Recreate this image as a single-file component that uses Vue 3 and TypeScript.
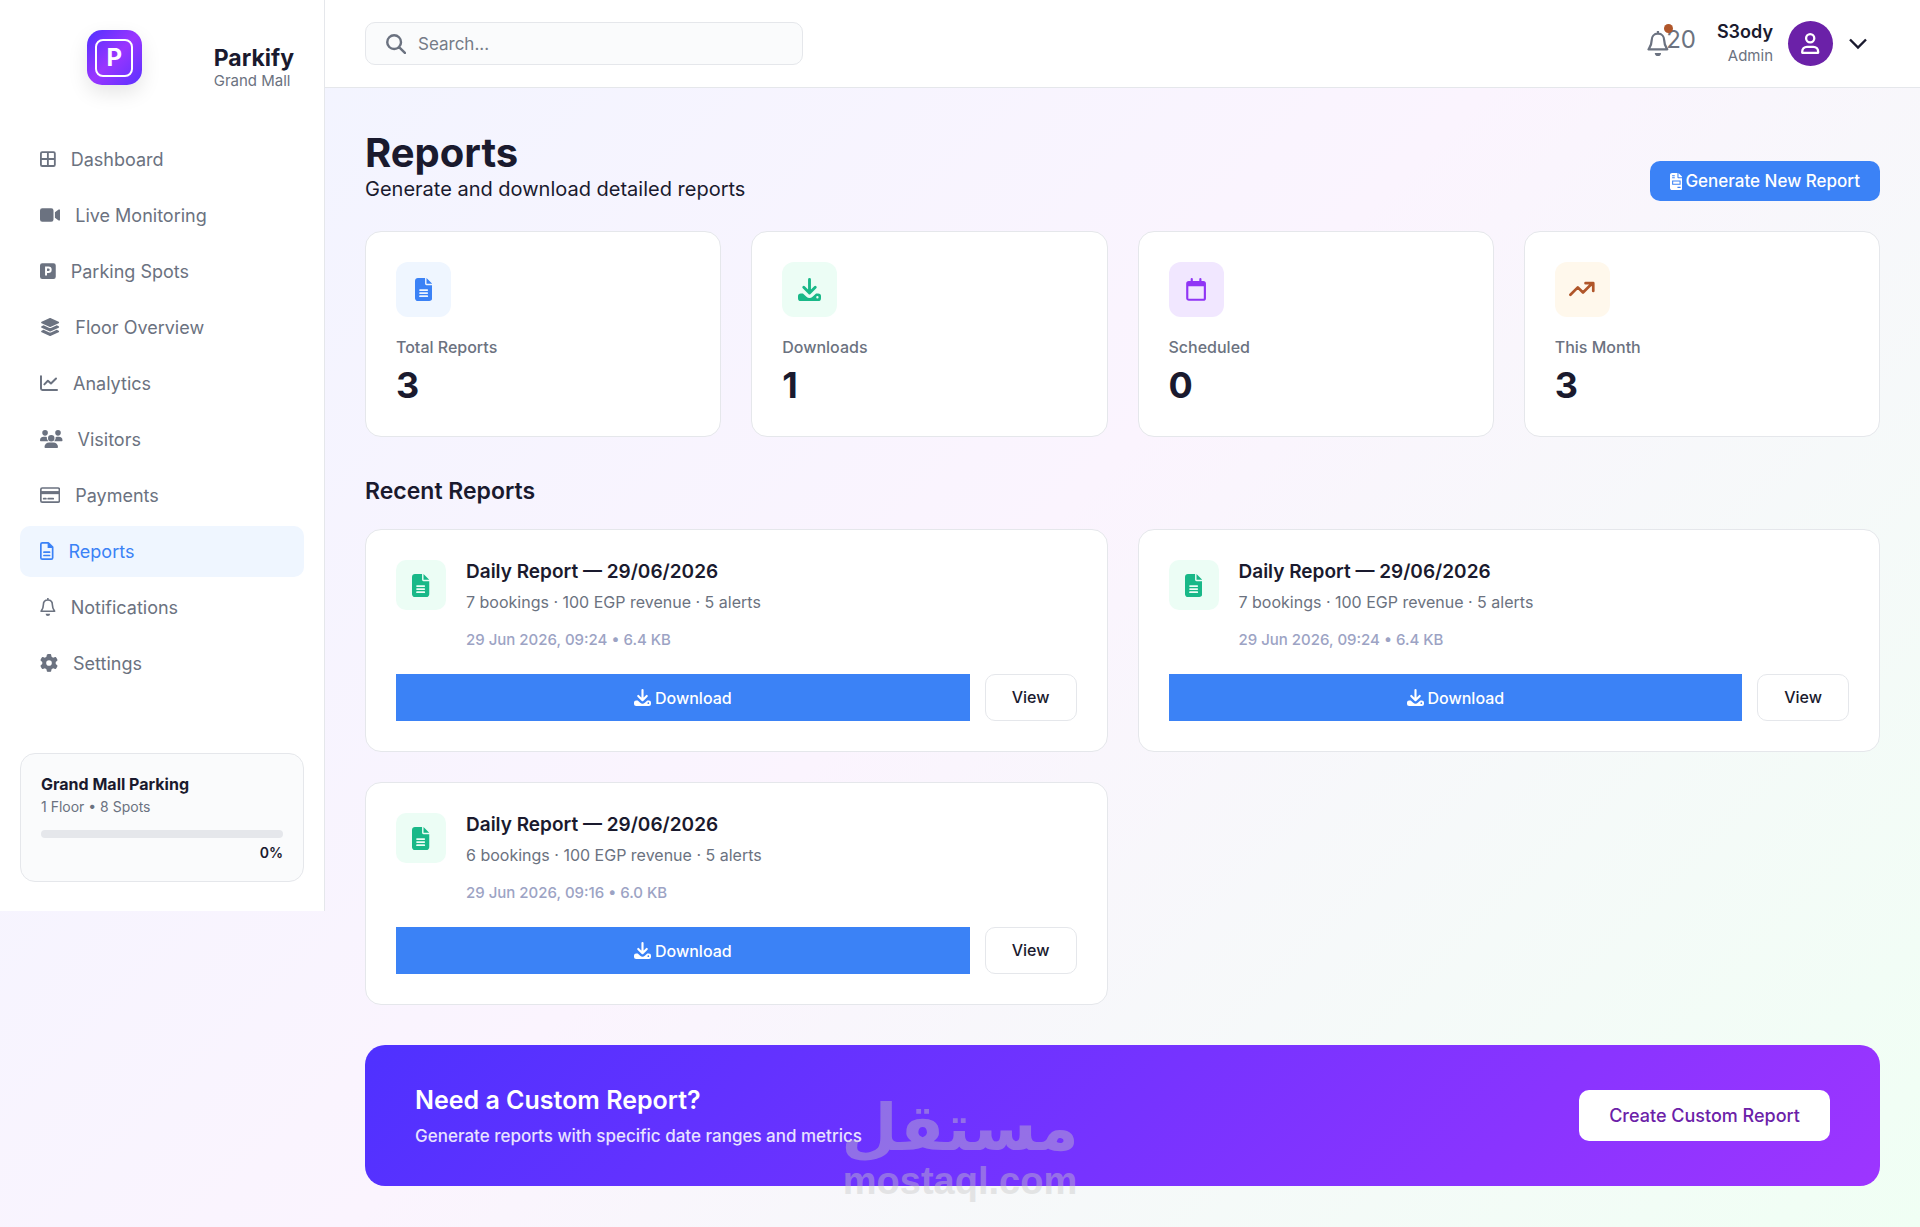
<script setup lang="ts">
import { h, ref } from 'vue'

interface Glyph {
  w: number
  fill?: string
  line?: string
  weight?: number
}

const glyphs: Record<string, Glyph> = {
  grid: { w: 448, line: 'M64 58H384a38 38 0 0 1 38 38V416a38 38 0 0 1-38 38H64a38 38 0 0 1-38-38V96a38 38 0 0 1 38-38zM224 58V454M26 256H422', weight: 52 },
  video: { w: 576, fill: 'M64 64H320a64 64 0 0 1 64 64V384a64 64 0 0 1-64 64H64a64 64 0 0 1-64-64V128a64 64 0 0 1 64-64zM424 176L520 104C545 88 576 100 576 128V384C576 412 545 424 520 408L424 336z' },
  parking: { w: 448, fill: 'M64 32H384a64 64 0 0 1 64 64V416a64 64 0 0 1-64 64H64a64 64 0 0 1-64-64V96a64 64 0 0 1 64-64zM144 128V384H200V312H240a92 92 0 0 0 0-184zM200 182H238a38 38 0 0 1 0 76H200z' },
  layers: { w: 576, fill: 'M264.5 5.2c14.9-6.9 32.1-6.9 47 0l218.6 101c8.5 3.9 13.9 12.4 13.9 21.8s-5.4 17.9-13.9 21.8l-218.6 101c-14.9 6.9-32.1 6.9-47 0L45.9 149.8C37.4 145.8 32 137.3 32 128s5.4-17.9 13.9-21.8L264.5 5.2zM476.9 209.6l53.2 24.6c8.5 3.9 13.9 12.4 13.9 21.8s-5.4 17.9-13.9 21.8l-218.6 101c-14.9 6.9-32.1 6.9-47 0L45.9 277.8C37.4 273.8 32 265.3 32 256s5.4-17.9 13.9-21.8l53.2-24.6 152 70.2c23.4 10.8 50.4 10.8 73.8 0l152-70.2zm-152 198.2l152-70.2 53.2 24.6c8.5 3.9 13.9 12.4 13.9 21.8s-5.4 17.9-13.9 21.8l-218.6 101c-14.9 6.9-32.1 6.9-47 0L45.9 405.8C37.4 401.8 32 393.3 32 384s5.4-17.9 13.9-21.8l53.2-24.6 152 70.2c23.4 10.8 50.4 10.8 73.8 0z' },
  chart: { w: 512, line: 'M28 60V412a40 40 0 0 0 40 40H484M124 296L224 192L312 272L456 128', weight: 56 },
  users: { w: 640, fill: 'M144 0a80 80 0 1 1 0 160a80 80 0 1 1 0-160zM512 0a80 80 0 1 1 0 160a80 80 0 1 1 0-160zM320 144a92 92 0 1 1 0 184a92 92 0 1 1 0-184zM0 299A107 107 0 0 1 107 192H150Q174 192 194 201Q182 270 235 320H21A21 21 0 0 1 0 299zM405 320Q458 270 446 201Q466 192 490 192H533A107 107 0 0 1 640 299A21 21 0 0 1 619 320zM128 485A133 133 0 0 1 261 352H379A133 133 0 0 1 512 485A27 27 0 0 1 485 512H155A27 27 0 0 1 128 485z' },
  card: { w: 576, line: 'M64 56H512a40 40 0 0 1 40 40V416a40 40 0 0 1-40 40H64a40 40 0 0 1-40-40V96a40 40 0 0 1 40-40zM104 360H168M232 360H376', fill: 'M16 144H560V232H16z', weight: 48 },
  file: { w: 384, line: 'M64 24H236L360 148V448a40 40 0 0 1-40 40H64a40 40 0 0 1-40-40V64a40 40 0 0 1 40-40zM112 288H272M112 384H272', fill: 'M216 16V168H368z', weight: 48 },
  bell: { w: 448, line: 'M224 6V48M224 56C142 56 96 118 96 190C96 282 68 318 32 376H416C380 318 352 282 352 190C352 118 306 56 224 56z', fill: 'M160 448H288A64 64 0 0 1 160 448z', weight: 46 },
  gear: { w: 512, fill: 'M495.9 166.6c3.2 8.7 .5 18.4-6.4 24.6l-43.3 39.4c1.1 8.3 1.7 16.8 1.7 25.4s-.6 17.1-1.7 25.4l43.3 39.4c6.9 6.2 9.6 15.9 6.4 24.6c-4.4 11.9-9.7 23.3-15.8 34.3l-4.7 8.1c-6.6 11-14 21.4-22.1 31.2c-5.9 7.2-15.7 9.6-24.5 6.8l-55.7-17.7c-13.4 10.3-28.2 18.9-44 25.4l-12.5 57.1c-2 9.1-9 16.3-18.2 17.8c-13.8 2.3-28 3.5-42.5 3.5s-28.7-1.2-42.5-3.5c-9.2-1.5-16.2-8.7-18.2-17.8l-12.5-57.1c-15.8-6.5-30.6-15.1-44-25.4L83.1 425.9c-8.8 2.8-18.6 .3-24.5-6.8c-8.1-9.8-15.5-20.2-22.1-31.2l-4.7-8.1c-6.1-11-11.4-22.4-15.8-34.3c-3.2-8.7-.5-18.4 6.4-24.6l43.3-39.4C64.6 273.1 64 264.6 64 256s.6-17.1 1.7-25.4L22.4 191.2c-6.9-6.2-9.6-15.9-6.4-24.6c4.4-11.9 9.7-23.3 15.8-34.3l4.7-8.1c6.6-11 14-21.4 22.1-31.2c5.9-7.2 15.7-9.6 24.5-6.8l55.7 17.7c13.4-10.3 28.2-18.9 44-25.4l12.5-57.1c2-9.1 9-16.3 18.2-17.8C227.3 1.2 241.5 0 256 0s28.7 1.2 42.5 3.5c9.2 1.5 16.2 8.7 18.2 17.8l12.5 57.1c15.8 6.5 30.6 15.1 44 25.4l55.7-17.7c8.8-2.8 18.6-.3 24.5 6.8c8.1 9.8 15.5 20.2 22.1 31.2l4.7 8.1c6.1 11 11.4 22.4 15.8 34.3zM256 336a80 80 0 1 0 0-160 80 80 0 1 0 0 160z' },
  doc: { w: 384, fill: 'M64 0C28.7 0 0 28.7 0 64V448c0 35.3 28.7 64 64 64H320c35.3 0 64-28.7 64-64V160H256c-17.7 0-32-14.3-32-32V0H64zM256 0V128H384L256 0zM112 248H272a20 20 0 0 1 0 40H112a20 20 0 0 1 0-40zM112 316H272a20 20 0 0 1 0 40H112a20 20 0 0 1 0-40zM112 384H272a20 20 0 0 1 0 40H112a20 20 0 0 1 0-40z' },
  invoice: { w: 384, fill: 'M64 0C28.7 0 0 28.7 0 64V448c0 35.3 28.7 64 64 64H320c35.3 0 64-28.7 64-64V160H256c-17.7 0-32-14.3-32-32V0H64zM256 0V128H384L256 0zM64 64H144V96H64zM64 128H144V160H64zM64 224H320V352H64zM96 256V320H288V256zM224 416H320V448H224z' },
  download: { w: 512, line: 'M256 32V320M128 208L256 336L384 208', fill: 'M64 344H110L188 416C226 452 286 452 324 416L402 344H448a64 64 0 0 1 64 64V448a64 64 0 0 1-64 64H64a64 64 0 0 1-64-64V408a64 64 0 0 1 64-64zM432 402a26 26 0 1 0 0 52a26 26 0 1 0 0-52z', weight: 64 },
  calendar: { w: 448, line: 'M64 88H384a36 36 0 0 1 36 36V448a36 36 0 0 1-36 36H64a36 36 0 0 1-36-36V124a36 36 0 0 1 36-36zM128 24V88M320 24V88', fill: 'M28 88H420V184H28z', weight: 48 },
  trend: { w: 576, line: 'M32 372L196 208L312 324L512 124M368 116H540V288', fill: 'M440 116H540V216z', weight: 60 },
  user: { w: 448, line: 'M224 28a100 100 0 1 1 0 200a100 100 0 1 1 0-200zM30 484V452C30 388 82 336 146 336H302C366 336 418 388 418 452V484z', weight: 56 },
  search: { w: 512, line: 'M208 32a176 176 0 1 1 0 352a176 176 0 1 1 0-352zM334 334L484 484', weight: 62 },
}

const nav = [
  { label: 'Dashboard', icon: 'grid' },
  { label: 'Live Monitoring', icon: 'video' },
  { label: 'Parking Spots', icon: 'parking' },
  { label: 'Floor Overview', icon: 'layers' },
  { label: 'Analytics', icon: 'chart' },
  { label: 'Visitors', icon: 'users' },
  { label: 'Payments', icon: 'card' },
  { label: 'Reports', icon: 'file' },
  { label: 'Notifications', icon: 'bell' },
  { label: 'Settings', icon: 'gear' },
]

const stats = [
  { label: 'Total Reports', value: 3, icon: 'doc', tone: 'blue' },
  { label: 'Downloads', value: 1, icon: 'download', tone: 'green' },
  { label: 'Scheduled', value: 0, icon: 'calendar', tone: 'purple' },
  { label: 'This Month', value: 3, icon: 'trend', tone: 'amber' },
]

const reports = [
  { title: 'Daily Report — 29/06/2026', summary: '7 bookings · 100 EGP revenue · 5 alerts', meta: '29 Jun 2026, 09:24 • 6.4 KB' },
  { title: 'Daily Report — 29/06/2026', summary: '7 bookings · 100 EGP revenue · 5 alerts', meta: '29 Jun 2026, 09:24 • 6.4 KB' },
  { title: 'Daily Report — 29/06/2026', summary: '6 bookings · 100 EGP revenue · 5 alerts', meta: '29 Jun 2026, 09:16 • 6.0 KB' },
]

const query = ref('')
const active = ref('Reports')
const occupancy = ref(0)

const Icon = (props: { name: string }) => {
  const g = glyphs[props.name]
  const parts = []
  if (g.fill) parts.push(h('path', { d: g.fill, fill: 'currentColor', 'fill-rule': 'evenodd' }))
  if (g.line) {
    parts.push(h('path', {
      d: g.line,
      fill: 'none',
      stroke: 'currentColor',
      'stroke-width': g.weight,
      'stroke-linecap': 'round',
      'stroke-linejoin': 'round',
    }))
  }
  return h('svg', { viewBox: `0 0 ${g.w} 512`, 'aria-hidden': 'true' }, parts)
}
Icon.props = ['name']
</script>

<template>
  <div class="page">
    <aside class="sidebar">
      <div class="brand">
        <div class="brand-mark">
          <div class="logo"><span class="logo-frame">P</span></div>
        </div>
        <div class="brand-text">
          <strong>Parkify</strong>
          <span>Grand Mall</span>
        </div>
      </div>
      <nav class="nav">
        <a
          v-for="item in nav"
          :key="item.label"
          href="#"
          class="nav-item"
          :class="{ active: item.label === active }"
          @click.prevent="active = item.label"
        >
          <Icon :name="item.icon" class="icon-nav" />
          <span>{{ item.label }}</span>
        </a>
      </nav>
      <section class="facility">
        <h2>Grand Mall Parking</h2>
        <p>1 Floor • 8 Spots</p>
        <div class="meter" role="progressbar" aria-label="Occupancy" :aria-valuenow="occupancy">
          <div class="meter-fill" :style="{ width: occupancy + '%' }"></div>
        </div>
        <span class="percent">{{ occupancy }}%</span>
      </section>
    </aside>

    <div class="content">
      <header class="topbar">
        <label class="search">
          <Icon name="search" class="icon-search" />
          <input v-model="query" type="search" placeholder="Search..." aria-label="Search" />
        </label>
        <div class="account">
          <button class="alerts" type="button" aria-label="Notifications, 20 unread">
            <Icon name="bell" class="icon-bell" />
            <span class="alert-count">20</span>
            <span class="alert-dot"></span>
          </button>
          <div class="identity">
            <strong>S3ody</strong>
            <span>Admin</span>
          </div>
          <div class="avatar"><Icon name="user" class="icon-user" /></div>
          <button class="more" type="button" aria-label="Account menu">
            <svg viewBox="0 0 20 12" aria-hidden="true">
              <path d="M2 1.500L10 9.500L18 1.500" fill="none" stroke="currentColor" stroke-width="2.400" />
            </svg>
          </button>
        </div>
      </header>

      <main class="main">
        <div class="heading">
          <div>
            <h1>Reports</h1>
            <p>Generate and download detailed reports</p>
          </div>
          <button class="generate" type="button">
            <Icon name="invoice" class="icon-small" />
            <span>Generate New Report</span>
          </button>
        </div>

        <section class="stats">
          <article v-for="stat in stats" :key="stat.label" class="card">
            <div class="stat-icon" :class="stat.tone"><Icon :name="stat.icon" class="icon-large" /></div>
            <p class="stat-label">{{ stat.label }}</p>
            <p class="stat-value">{{ stat.value }}</p>
          </article>
        </section>

        <h2 class="section-title">Recent Reports</h2>
        <section class="reports">
          <article v-for="(report, i) in reports" :key="i" class="card">
            <div class="report-info">
              <div class="report-icon green"><Icon name="doc" class="icon-large" /></div>
              <div>
                <h3>{{ report.title }}</h3>
                <p class="summary">{{ report.summary }}</p>
                <p class="meta">{{ report.meta }}</p>
              </div>
            </div>
            <div class="actions">
              <button class="download" type="button">
                <Icon name="download" class="icon-small" />
                <span>Download</span>
              </button>
              <button class="view" type="button">View</button>
            </div>
          </article>
        </section>

        <section class="banner">
          <div>
            <h2>Need a Custom Report?</h2>
            <p>Generate reports with specific date ranges and metrics</p>
          </div>
          <button type="button">Create Custom Report</button>
        </section>
      </main>
    </div>

    <div class="watermark">
      <span class="watermark-ar" lang="ar" dir="rtl">مستقل</span>
      <span class="watermark-en">mostaql.com</span>
    </div>
  </div>
</template>

<style>
body {
  margin: 0;
}
</style>

<style scoped>
* {
  box-sizing: border-box;
}

.page {
  position: relative;
  display: flex;
  align-items: flex-start;
  min-height: 100vh;
  font-family: Inter, "Liberation Sans", sans-serif;
  color: #1a1a2e;
  background: linear-gradient(135deg, #f0f4ff 0%, #fbf4fe 50%, #f0fff4 100%);
}

h1, h2, h3, p {
  margin: 0;
}

button {
  font: inherit;
  cursor: pointer;
}

svg {
  display: block;
  flex: none;
  width: auto;
}

.sidebar {
  flex: none;
  width: 325px;
  padding-bottom: 29px;
  background: #fff;
  border-right: 1px solid #e5e7eb;
}

.brand {
  display: flex;
  align-items: flex-start;
  gap: 15px;
  padding: 30px 30px 39px;
}

.brand-mark {
  flex: 1;
  display: flex;
  justify-content: center;
}

.logo {
  display: grid;
  place-items: center;
  width: 55px;
  height: 55px;
  border-radius: 15px;
  background: linear-gradient(135deg, #4f31ff 0%, #9a35ff 50%, #5a32ff 100%);
  box-shadow: 0 8px 20px rgba(0, 0, 0, 0.1);
}

.logo-frame {
  display: grid;
  place-items: center;
  width: 38px;
  height: 38px;
  border: 2px solid #fff;
  border-radius: 8px;
  color: #fff;
  font-size: 24px;
  font-weight: 700;
  line-height: 34px;
}

.brand-text {
  display: flex;
  flex-direction: column;
  padding-top: 14px;
}

.brand-text strong {
  font-size: 23px;
  line-height: 28px;
}

.brand-text span {
  font-size: 15px;
  line-height: 18px;
  color: #6b7280;
}

.nav {
  display: flex;
  flex-direction: column;
  gap: 5px;
  padding: 5px 20px 64px;
}

.nav-item {
  display: flex;
  align-items: center;
  gap: 15px;
  padding: 15px 20px;
  border-radius: 10px;
  color: #6b7280;
  font-size: 18px;
  font-weight: 400;
  line-height: 21px;
  text-decoration: none;
}

.nav-item.active {
  color: #3b82f6;
  background: #eff6ff;
}

.icon-nav {
  height: 18px;
  margin-bottom: 2px;
}

.facility {
  display: flex;
  flex-direction: column;
  margin: 0 20px;
  padding: 20px;
  border: 1px solid #e5e7eb;
  border-radius: 15px;
  background: #fafbfc;
}

.facility h2 {
  font-size: 16px;
  font-weight: 700;
  line-height: 20px;
}

.facility p {
  margin: 5px 0 15px;
  font-size: 14px;
  line-height: 16px;
  color: #6b7280;
}

.meter {
  height: 8px;
  border-radius: 10px;
  background: #e5e7eb;
  overflow: hidden;
}

.meter-fill {
  height: 100%;
  background: #3b82f6;
}

.percent {
  align-self: flex-end;
  padding-top: 6px;
  font-size: 14px;
  font-weight: 600;
  line-height: 17px;
}

.content {
  flex: 1;
  min-width: 0;
}

.topbar {
  display: flex;
  align-items: center;
  justify-content: space-between;
  padding: 21px 52px 21px 40px;
  border-bottom: 1px solid #e5e7eb;
  background: #fff;
}

.search {
  display: flex;
  align-items: center;
  gap: 12px;
  width: 438px;
  padding: 10px 20px;
  border: 1px solid #e5e7eb;
  border-radius: 10px;
  background: #fafbfc;
  color: #6b7280;
}

.icon-search {
  height: 20px;
}

.search input {
  flex: 1;
  min-width: 0;
  height: 21px;
  padding: 0;
  border: 0;
  outline: 0;
  background: none;
  font: inherit;
  font-size: 17px;
  color: #1a1a2e;
}

.search input::placeholder {
  color: #757b87;
}

.account {
  display: flex;
  align-items: center;
  gap: 15px;
}

.alerts {
  position: relative;
  display: flex;
  align-items: center;
  margin-right: 6px;
  padding: 0;
  border: 0;
  background: none;
  color: #6b7280;
}

.icon-bell {
  height: 25px;
}

.alert-count {
  margin: 0 0 8px -3px;
  font-size: 24px;
  line-height: 28px;
}

.alert-dot {
  position: absolute;
  top: -2px;
  left: 17px;
  width: 9px;
  height: 9px;
  border-radius: 50%;
  background: #b0562a;
}

.identity {
  display: flex;
  flex-direction: column;
  align-items: flex-end;
}

.identity strong {
  font-size: 18px;
  font-weight: 600;
  line-height: 22px;
}

.identity span {
  padding-top: 2px;
  font-size: 15px;
  line-height: 21px;
  color: #6b7280;
}

.avatar {
  display: grid;
  place-items: center;
  width: 45px;
  height: 45px;
  border-radius: 50%;
  background: #6b21a8;
  color: #fff;
}

.icon-user {
  height: 21px;
}

.more {
  padding: 0;
  border: 0;
  background: none;
  color: #1a1a2e;
}

.more svg {
  width: 20px;
  height: 12px;
}

.main {
  padding: 40px;
}

.heading {
  display: flex;
  align-items: flex-end;
  justify-content: space-between;
  padding-bottom: 30px;
}

.heading h1 {
  font-size: 40px;
  font-weight: 700;
  line-height: 49px;
}

.heading p {
  font-size: 20px;
  line-height: 24px;
}

.generate {
  display: flex;
  align-items: center;
  gap: 3px;
  padding: 10px 20px;
  border: 0;
  border-radius: 10px;
  background: #3b82f6;
  color: #fff;
  font-size: 17px;
  font-weight: 500;
  line-height: 20px;
}

.icon-small {
  height: 17px;
}

.icon-large {
  height: 23px;
}

.stats {
  display: grid;
  grid-template-columns: repeat(4, 1fr);
  gap: 30px;
}

.card {
  padding: 30px;
  border: 1px solid #e5e7eb;
  border-radius: 16px;
  background: #fff;
}

.stat-icon {
  display: grid;
  place-items: center;
  width: 55px;
  height: 55px;
  border-radius: 12px;
}

.blue {
  color: #3b82f6;
  background: #eff6ff;
}

.green {
  color: #19b888;
  background: #ecfdf5;
}

.purple {
  color: #9035f5;
  background: #f1e7ff;
}

.amber {
  color: #b0562a;
  background: #fff8ec;
}

.stat-label {
  padding-top: 20px;
  font-size: 16px;
  font-weight: 500;
  line-height: 20px;
  color: #6b7280;
}

.stat-value {
  padding-top: 8px;
  font-size: 36px;
  font-weight: 700;
  line-height: 41px;
}

.section-title {
  padding: 40px 0 24px;
  font-size: 23px;
  font-weight: 600;
  line-height: 28px;
}

.reports {
  display: grid;
  grid-template-columns: repeat(2, 1fr);
  gap: 30px;
}

.report-info {
  display: flex;
  gap: 20px;
}

.report-icon {
  display: grid;
  place-items: center;
  width: 50px;
  height: 50px;
  border-radius: 10px;
}

.report-info h3 {
  font-size: 19px;
  font-weight: 600;
  line-height: 24px;
}

.summary {
  padding-top: 8px;
  font-size: 16px;
  line-height: 20px;
  color: #6b7280;
}

.meta {
  padding-top: 19px;
  font-size: 15px;
  font-weight: 500;
  line-height: 18px;
  color: #9ca3c4;
}

.actions {
  display: flex;
  gap: 15px;
  padding-top: 25px;
}

.download {
  flex: 1;
  display: flex;
  align-items: center;
  justify-content: center;
  gap: 4px;
  border: 0;
  background: #3b82f6;
  color: #fff;
  font-size: 16px;
  font-weight: 500;
}

.view {
  padding: 12px 26px;
  border: 1px solid #e5e7eb;
  border-radius: 10px;
  background: #fff;
  color: #1a1a2e;
  font-size: 16px;
  font-weight: 500;
  line-height: 21px;
}

.banner {
  display: flex;
  align-items: center;
  justify-content: space-between;
  margin-top: 40px;
  padding: 40px 50px;
  border-radius: 20px;
  background: linear-gradient(135deg, #4f31ff 0%, #9d35ff 100%);
  color: #fff;
}

.banner h2 {
  font-size: 25px;
  font-weight: 600;
  line-height: 30px;
}

.banner p {
  padding-top: 11px;
  font-size: 17px;
  font-weight: 500;
  line-height: 20px;
  color: #e8e2ff;
}

.banner button {
  padding: 15px 30px;
  border: 0;
  border-radius: 10px;
  background: #fff;
  color: #6b21a8;
  font-size: 18px;
  font-weight: 500;
  line-height: 21px;
}

.watermark {
  position: absolute;
  bottom: 26px;
  left: 50%;
  transform: translateX(-50%);
  display: flex;
  flex-direction: column;
  align-items: center;
  color: #c7c7c7;
  font-weight: 700;
  opacity: 0.41;
  pointer-events: none;
}

.watermark-ar {
  font-family: "DejaVu Sans", sans-serif;
  font-size: 65px;
  line-height: 66px;
}

.watermark-en {
  font-family: "Liberation Sans", sans-serif;
  font-size: 38px;
  line-height: 40px;
}
</style>
